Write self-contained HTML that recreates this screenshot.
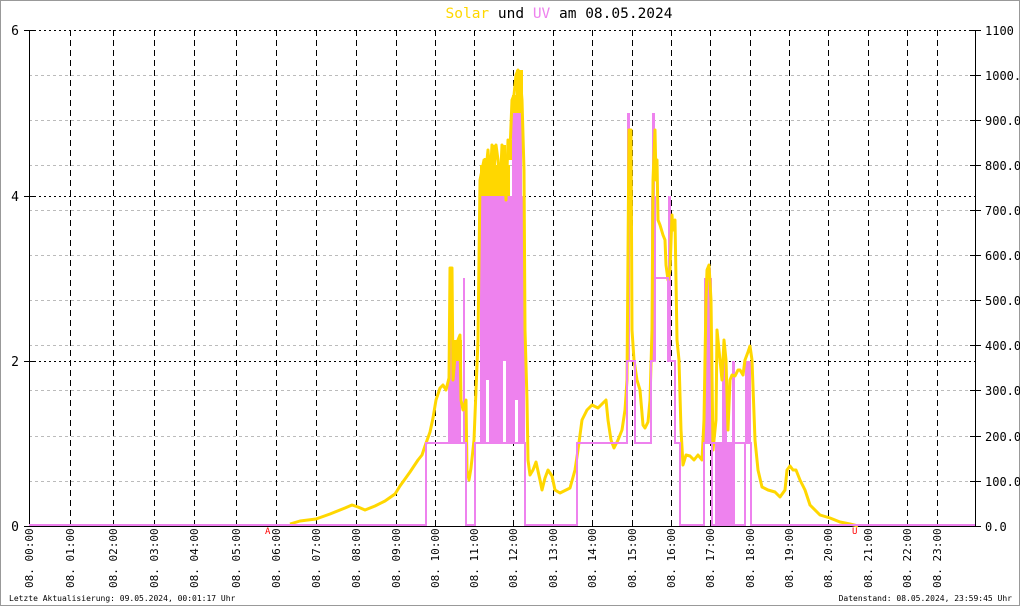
<!DOCTYPE html>
<html><head><meta charset="utf-8"><style>
html,body{margin:0;padding:0;background:#fff}
svg{display:block}
text{font-family:"DejaVu Sans Mono","Liberation Mono",monospace}
</style></head><body>
<svg width="1020" height="606" viewBox="0 0 1020 606" xmlns="http://www.w3.org/2000/svg">
<rect x="0.5" y="0.5" width="1019" height="605" fill="#fff" stroke="#999"/>
<text x="559" y="18" font-size="14.5" text-anchor="middle"><tspan fill="#ffd700">Solar</tspan> und <tspan fill="#ee82ee">UV</tspan> am 08.05.2024</text>
<g stroke="#bbb" stroke-dasharray="3,3" stroke-width="1">
<path d="M29,75.5H975M29,120.5H975M29,165.5H975M29,210.5H975M29,255.5H975M29,300.5H975M29,345.5H975M29,390.5H975M29,436.5H975M29,481.5H975"/>
</g>
<g stroke="#000" stroke-dasharray="2,3" stroke-width="1">
<path d="M29,30.5H975M29,196.5H975M29,361.5H975"/>
</g>
<g stroke="#000" stroke-dasharray="6,4" stroke-width="1">
<path d="M70.5,30V526M113.5,30V526M154.5,30V526M194.5,30V526M236.5,30V526M276.5,30V526M316.5,30V526M356.5,30V526M396.5,30V526M435.5,30V526M474.5,30V526M513.5,30V526M553.5,30V526M592.5,30V526M632.5,30V526M671.5,30V526M710.5,30V526M750.5,30V526M789.5,30V526M828.5,30V526M868.5,30V526M907.5,30V526M937.5,30V526"/>
</g>
<g stroke="#000" stroke-width="1">
<path d="M29.5,30V527M975.5,30V527M29,526.5H975"/>
<path d="M24,30.5H34M24,196.5H34M24,361.5H34M24,526.5H34"/>
<path d="M970,30.5H981M970,75.5H981M970,120.5H981M970,165.5H981M970,210.5H981M970,255.5H981M970,300.5H981M970,345.5H981M970,390.5H981M970,436.5H981M970,481.5H981M970,526.5H981"/>
</g>
<g font-size="13" text-anchor="end">
<text x="19" y="35">6</text><text x="19" y="201">4</text><text x="19" y="366">2</text><text x="19" y="531">0</text>
</g>
<g font-size="12">
<text x="985" y="35">1100</text><text x="985" y="80">1000.</text><text x="985" y="125">900.0</text><text x="985" y="170">800.0</text><text x="985" y="215">700.0</text><text x="985" y="260">600.0</text><text x="985" y="305">500.0</text><text x="985" y="350">400.0</text><text x="985" y="395">300.0</text><text x="985" y="441">200.0</text><text x="985" y="486">100.0</text><text x="985" y="531">0.0</text>
</g>
<!-- yellow fill behind -->
<g fill="#ffd700">
<rect x="480" y="165" width="30" height="40"/>
<rect x="484" y="158" width="4" height="10"/>
<rect x="492" y="145" width="4" height="20"/>
<rect x="502" y="145" width="4" height="20"/>
<rect x="508" y="140" width="4" height="20"/>
<rect x="512" y="95" width="6" height="25"/>
<rect x="516" y="70" width="7" height="45"/>
<rect x="448" y="340" width="14" height="30"/>
</g>
<g fill="#ee82ee">
<rect x="448" y="361" width="13" height="82"/>
<rect x="449" y="278" width="3" height="83"/>
<rect x="463" y="278" width="2" height="165"/>
<rect x="480" y="196" width="45" height="247"/>
<rect x="512" y="113" width="10" height="83"/>
<rect x="627" y="113" width="3" height="248"/>
<rect x="651" y="196" width="5" height="165"/>
<rect x="652" y="113" width="3" height="83"/>
<rect x="668" y="196" width="3" height="165"/>
<rect x="704" y="278" width="8" height="165"/>
<rect x="706" y="268" width="5" height="15"/>
<rect x="715" y="443" width="10" height="83"/>
<rect x="722" y="361" width="5" height="165"/>
<rect x="727" y="443" width="8" height="83"/>
<rect x="732" y="361" width="3" height="165"/>
<rect x="745" y="361" width="6" height="82"/>
</g>
<g fill="#fff">
<rect x="486" y="380" width="3" height="63"/>
<rect x="503" y="361" width="3" height="82"/>
<rect x="515" y="400" width="3" height="43"/>
</g>
<polyline fill="none" stroke="#ffd700" stroke-width="3" stroke-linejoin="round" points="290,524 300,521 316,519 330,514 345,508 352,505 358,507 365,510 375,506 385,501 395,494 400,486 410,472 418,460 422,455 425,446 430,432 433,418 436,400 440,388 443,385 446,390 449,378 450,268 452,268 453,380 456,345 458,340 460,335 461,400 463,410 466,400 467,470 469,480 471,468 474,440 476,390 478,340 480,180 484,160 486,170 488,150 490,180 492,145 494,170 496,145 498,160 500,190 502,145 504,150 506,200 508,140 510,150 512,100 514,95 516,75 518,70 520,75 522,100 524,170 525,330 527,400 528,460 530,475 533,470 536,462 540,480 542,490 545,478 548,470 552,476 555,490 560,493 570,488 575,470 578,450 582,420 587,410 592,405 598,408 603,403 606,400 608,420 611,440 614,448 618,440 622,430 625,410 627,380 629,130 631,130 632,330 634,360 637,380 640,390 643,425 645,428 648,422 650,400 652,330 653,180 655,130 656,180 657,160 658,220 660,225 663,235 665,240 666,265 668,280 670,270 672,215 673,230 675,220 677,340 679,360 681,430 683,465 686,455 690,456 694,460 698,455 702,460 704,420 706,300 707,270 709,265 711,300 713,450 716,420 717,330 719,350 722,380 724,340 726,360 728,430 730,380 732,375 735,376 738,370 740,370 743,375 745,360 748,352 750,346 752,360 755,440 758,470 762,487 768,490 775,492 780,497 785,490 787,470 790,466 793,470 796,470 800,480 805,490 810,505 820,515 830,518 840,522 850,524 858,526"/>
<path fill="none" stroke="#ee82ee" stroke-width="2" d="M29,525H426V443H466V525H475V443H525V525H577V443H627V361H635V443H651V361H655V278H668V361H675V443H680V525H704V443H712V525H715M735,525H745V443H751V525H975"/>
<path fill="none" stroke="#ee82ee" stroke-width="2" d="M712,443H745"/>
<text x="265" y="534" font-size="9" fill="#f00">A</text>
<text x="852" y="534" font-size="9" fill="#f00">U</text>
<g font-size="11">
<text transform="translate(33,588) rotate(-90)">08. 00:00</text>
<text transform="translate(74,588) rotate(-90)">08. 01:00</text>
<text transform="translate(117,588) rotate(-90)">08. 02:00</text>
<text transform="translate(158,588) rotate(-90)">08. 03:00</text>
<text transform="translate(198,588) rotate(-90)">08. 04:00</text>
<text transform="translate(240,588) rotate(-90)">08. 05:00</text>
<text transform="translate(280,588) rotate(-90)">08. 06:00</text>
<text transform="translate(320,588) rotate(-90)">08. 07:00</text>
<text transform="translate(360,588) rotate(-90)">08. 08:00</text>
<text transform="translate(400,588) rotate(-90)">08. 09:00</text>
<text transform="translate(439,588) rotate(-90)">08. 10:00</text>
<text transform="translate(478,588) rotate(-90)">08. 11:00</text>
<text transform="translate(517,588) rotate(-90)">08. 12:00</text>
<text transform="translate(557,588) rotate(-90)">08. 13:00</text>
<text transform="translate(596,588) rotate(-90)">08. 14:00</text>
<text transform="translate(636,588) rotate(-90)">08. 15:00</text>
<text transform="translate(675,588) rotate(-90)">08. 16:00</text>
<text transform="translate(714,588) rotate(-90)">08. 17:00</text>
<text transform="translate(754,588) rotate(-90)">08. 18:00</text>
<text transform="translate(793,588) rotate(-90)">08. 19:00</text>
<text transform="translate(832,588) rotate(-90)">08. 20:00</text>
<text transform="translate(872,588) rotate(-90)">08. 21:00</text>
<text transform="translate(911,588) rotate(-90)">08. 22:00</text>
<text transform="translate(941,588) rotate(-90)">08. 23:00</text>
</g>
<text x="9" y="601" font-size="8">Letzte Aktualisierung: 09.05.2024, 00:01:17 Uhr</text>
<text x="1012" y="601" font-size="8" text-anchor="end">Datenstand: 08.05.2024, 23:59:45 Uhr</text>
</svg>
</body></html>
